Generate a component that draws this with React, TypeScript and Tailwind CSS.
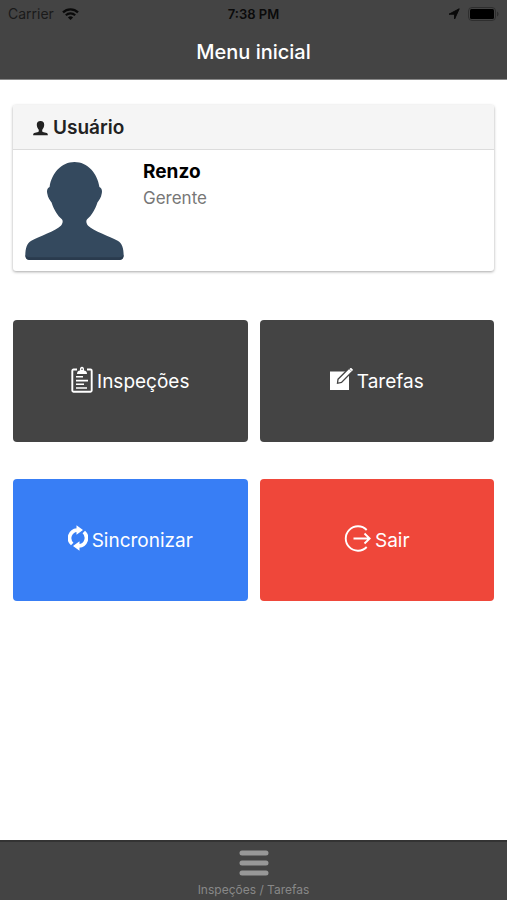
import React from "react";

function WifiIcon() {
  return (
    <svg width="17" height="12" viewBox="0 0 17 12" fill="none" stroke="#0a0a0a" aria-hidden="true">
      <path d="M1 4.4a10.8 10.8 0 0 1 15 0" strokeWidth="2.3" />
      <path d="M3.8 7.3a6.8 6.8 0 0 1 9.4 0" strokeWidth="2.1" />
      <path d="M8.5 12 5.9 9.4a3.8 3.8 0 0 1 5.2 0z" fill="#0a0a0a" stroke="none" />
    </svg>
  );
}

function LocationIcon() {
  return (
    <svg width="12" height="12" viewBox="0 0 12 12" fill="#0a0a0a" stroke="#0a0a0a" strokeLinejoin="round" aria-hidden="true">
      <path d="M11.2.8 6.6 11V6.2H1z" />
    </svg>
  );
}

function BatteryIcon() {
  return (
    <svg width="31" height="14" viewBox="0 0 31 14" aria-hidden="true">
      <rect x="0.5" y="0.5" width="27" height="13" rx="3.5" fill="none" stroke="#2e2e2e" />
      <rect x="2" y="2" width="24" height="10" rx="1.5" fill="#000" />
      <path d="M29 4.5c2 .8 2 4.2 0 5z" fill="#2e2e2e" />
    </svg>
  );
}

function PersonIcon() {
  return (
    <svg width="15" height="15" viewBox="0 0 15 15" fill="#222" aria-hidden="true">
      <path d="M7.5 0C10 0 11.300 1.500 11.200 3.700c0 2-.9 3.700-1.800 4.700-.4.900-.2 2.300.5 2.600 1.100.5 2.900.6 3.800 1 .8.400 1.100 1.100 1.200 2.300H.1c.1-1.200.4-1.900 1.200-2.300.9-.4 2.700-.5 3.800-1 .7-.3.900-1.700.5-2.600-.9-1-1.800-2.700-1.800-4.700C3.700 1.500 5 0 7.500 0z" />
    </svg>
  );
}

function Avatar() {
  return (
    <svg width="99" height="98" viewBox="0 0 296 295" className="shrink-0" role="img" aria-label="Renzo">
      <path
        fill="#34495e"
        d="M148 0c39 0 69 33 75 75 7 3 9 11 7 20-2 13-8 20-13 27-7 22-18 40-31 50-4 5-3 13 3 20 17 16 64 32 89 45 13 7 18 23 18 45 0 8-5 13-13 13H13c-8 0-13-5-13-13 0-22 5-38 18-45 25-13 72-29 89-45 6-7 7-15 3-20-13-10-24-28-31-50-5-7-11-14-13-27-2-9 0-17 7-20C79 33 109 0 148 0z"
      />
      <path fill="#2a3b4e" d="M0 278c0 11 5 17 13 17h270c8 0 13-6 13-17-1 6-6 9-13 9H13c-7 0-12-3-13-9z" />
    </svg>
  );
}

function ClipboardIcon() {
  return (
    <svg width="22" height="27" viewBox="0 0 22 27" fill="none" stroke="#fff" aria-hidden="true">
      <path d="M6 3.5H2.5a1.200 1.200 0 0 0-1.200 1.200v19.800a1.200 1.200 0 0 0 1.200 1.200h17a1.200 1.200 0 0 0 1.200-1.200V4.700a1.200 1.200 0 0 0-1.200-1.200H16" strokeWidth="1.9" />
      <path d="M6 8c0-2.400 1-3.300 3-3.600C8.700 2 9.500.7 11 .7s2.300 1.300 2 3.700c2 .3 3 1.200 3 3.600z" fill="#fff" stroke="none" />
      <circle cx="11" cy="3.2" r="0.8" fill="#444" stroke="none" />
      <path d="M5 10.800h7M5 14.600h12M5 18.300h8M5 22h11" strokeWidth="1.6" />
    </svg>
  );
}

function ComposeIcon() {
  return (
    <svg width="23" height="22" viewBox="0 0 23 22" aria-hidden="true">
      <path d="M0 3.500h19V22H0z" fill="#fff" />
      <path d="M8 11.200 19 .2l3.600 3L11.500 14.500 7.500 15.300z" fill="#fff" stroke="#444" strokeWidth="1.300" />
      <path d="m20.200.3 2.300 2.300" stroke="#fff" strokeWidth="2" />
    </svg>
  );
}

function SyncIcon() {
  return (
    <svg width="20" height="26" viewBox="0 0 20 26" aria-hidden="true">
      <path d="M9 5.100a8 8 0 0 0-4.800 13.900M11 20.900A8 8 0 0 0 15.800 7" fill="none" stroke="#fff" strokeWidth="3.700" />
      <path d="M8.500.3 15 5 8.500 9.800zM11.500 16.200 5 21l6.500 4.700z" fill="#fff" />
    </svg>
  );
}

function ExitIcon() {
  return (
    <svg width="27" height="27" viewBox="0 0 27 27" fill="none" stroke="#fff" strokeWidth="1.900" aria-hidden="true">
      <path d="M22.700 5A12.200 12.200 0 1 0 22.700 22" />
      <path d="M9.500 13.500h16M20.500 8.500l5.200 5-5.200 5" />
    </svg>
  );
}

function MenuIcon() {
  return (
    <svg width="30" height="26" viewBox="0 0 30 26" stroke="#989898" strokeWidth="5" strokeLinecap="round" aria-hidden="true">
      <path d="M3 3h24M3 13h24M3 23h24" />
    </svg>
  );
}

const actions = [
  { label: "Inspeções", icon: <ClipboardIcon />, color: "bg-[#444444]" },
  { label: "Tarefas", icon: <ComposeIcon />, color: "bg-[#444444]" },
  { label: "Sincronizar", icon: <SyncIcon />, color: "bg-[#387ef5]" },
  { label: "Sair", icon: <ExitIcon />, color: "bg-[#ef473a]" },
];

function App() {
  return (
    <div className="flex min-h-screen flex-col bg-white font-['Inter','Liberation_Sans',sans-serif]">
      <header className="border-b border-[#888] bg-[#444444]">
        <div className="grid grid-cols-3 items-center px-2 pt-1 text-[13px] leading-5 text-[#0a0a0a]">
          <div className="flex items-center gap-2">
            <span className="text-[14px] text-[#1a1a1a]">Carrier</span>
            <WifiIcon />
          </div>
          <span className="text-center font-semibold">7:38 PM</span>
          <div className="flex items-center justify-end gap-2">
            <LocationIcon />
            <BatteryIcon />
          </div>
        </div>
        <h1 className="pt-[13px] pb-3 text-center text-[20px] leading-[30px] font-medium text-white">
          Menu inicial
        </h1>
      </header>

      <main className="flex-1 px-[13px] pt-[25px]">
        <section className="overflow-hidden rounded-[3px] bg-white shadow-[0_1px_3px_rgba(0,0,0,0.35)]">
          <h2 className="flex items-center gap-[5px] border-b border-[#dcdcdc] bg-[#f5f5f5] px-5 pt-[9px] pb-[7px] text-[19px] leading-7 font-semibold text-[#222]">
            <PersonIcon />
            Usuário
          </h2>
          <div className="flex gap-[19px] px-3 pt-3 pb-[11px]">
            <Avatar />
            <div>
              <h3 className="text-[19px] leading-5 font-bold text-black">Renzo</h3>
              <p className="pt-1 text-[17px] leading-6 text-[#777]">Gerente</p>
            </div>
          </div>
        </section>

        <div className="grid grid-cols-2 gap-x-3 gap-y-[37px] pt-[49px] pb-6">
          {actions.map((action) => (
            <button
              key={action.label}
              type="button"
              className={`flex h-[122px] items-center justify-center gap-1 rounded pt-0.5 text-[19px] text-white ${action.color}`}
            >
              <span className="pb-1.5">{action.icon}</span>
              {action.label}
            </button>
          ))}
        </div>
      </main>

      <nav className="border-t-2 border-[#333] bg-[#444444]">
        <button
          type="button"
          className="flex w-full flex-col items-center gap-1 pt-2 text-[12px] leading-5 text-[#888]"
        >
          <MenuIcon />
          Inspeções / Tarefas
        </button>
      </nav>
    </div>
  );
}

export default App;
